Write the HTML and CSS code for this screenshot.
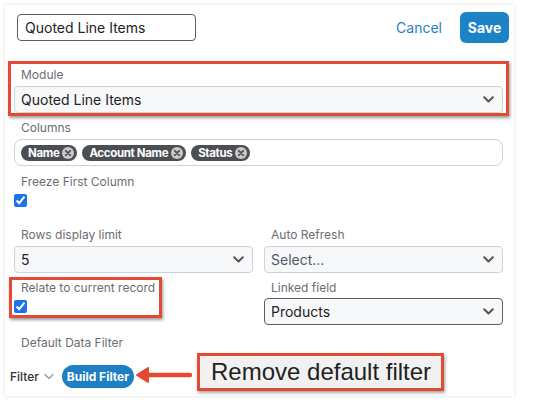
FILE: index.html
```html
<!DOCTYPE html>
<html>
<head>
<meta charset="utf-8">
<link rel="stylesheet" href="styles.css">
</head>
<body>
<div class="card">
  <div class="header">
    <div class="title-input">Quoted Line Items</div>
    <div class="actions">
      <span class="cancel">Cancel</span>
      <span class="save">Save</span>
    </div>
  </div>
  <div class="form">
    <div class="hl hl-module">
      <div class="label">Module</div>
      <div class="select"><span>Quoted Line Items</span><svg class="chev" width="11" height="7" viewBox="0 0 11 7"><path d="M1.2 1.2 L5.5 5.5 L9.8 1.2" fill="none" stroke="#555" stroke-width="2" stroke-linecap="round" stroke-linejoin="round"/></svg></div>
    </div>
    <div class="label mt4">Columns</div>
    <div class="multi">
      <span class="chip">Name<span class="x"><svg width="12" height="12" viewBox="0 0 12 12"><circle cx="6" cy="6" r="6" fill="#c9c9c9"/><path d="M3.8 3.8 L8.2 8.2 M8.2 3.8 L3.8 8.2" stroke="#4b4e52" stroke-width="1.8" stroke-linecap="round"/></svg></span></span>
      <span class="chip">Account Name<span class="x"><svg width="12" height="12" viewBox="0 0 12 12"><circle cx="6" cy="6" r="6" fill="#c9c9c9"/><path d="M3.8 3.8 L8.2 8.2 M8.2 3.8 L3.8 8.2" stroke="#4b4e52" stroke-width="1.8" stroke-linecap="round"/></svg></span></span>
      <span class="chip">Status<span class="x"><svg width="12" height="12" viewBox="0 0 12 12"><circle cx="6" cy="6" r="6" fill="#c9c9c9"/><path d="M3.8 3.8 L8.2 8.2 M8.2 3.8 L3.8 8.2" stroke="#4b4e52" stroke-width="1.8" stroke-linecap="round"/></svg></span></span>
    </div>
    <div class="label mt8">Freeze First Column</div>
    <div class="cb-row"><input type="checkbox" checked></div>
    <div class="grid">
      <div class="col">
        <div class="label">Rows display limit</div>
        <div class="select"><span>5</span><svg class="chev" width="11" height="7" viewBox="0 0 11 7"><path d="M1.2 1.2 L5.5 5.5 L9.8 1.2" fill="none" stroke="#555" stroke-width="2" stroke-linecap="round" stroke-linejoin="round"/></svg></div>
        <div class="hl hl-relate">
          <div class="label">Relate to current record</div>
          <div class="cb-row"><input type="checkbox" checked></div>
        </div>
      </div>
      <div class="col">
        <div class="label">Auto Refresh</div>
        <div class="select"><span class="ph">Select...</span><svg class="chev" width="11" height="7" viewBox="0 0 11 7"><path d="M1.2 1.2 L5.5 5.5 L9.8 1.2" fill="none" stroke="#555" stroke-width="2" stroke-linecap="round" stroke-linejoin="round"/></svg></div>
        <div class="label linked">Linked field</div>
        <div class="select dark"><span>Products</span><svg class="chev" width="11" height="7" viewBox="0 0 11 7"><path d="M1.2 1.2 L5.5 5.5 L9.8 1.2" fill="none" stroke="#555" stroke-width="2" stroke-linecap="round" stroke-linejoin="round"/></svg></div>
      </div>
    </div>
    <div class="label mt10">Default Data Filter</div>
    <div class="filter-row">
      <span class="filter">Filter</span>
      <svg class="fchev" width="10" height="7" viewBox="0 0 10 7"><path d="M1 1.5 L5 5.5 L9 1.5" fill="none" stroke="#9aa3ad" stroke-width="1.6" stroke-linecap="round" stroke-linejoin="round"/></svg>
      <span class="build">Build Filter</span>
      <div class="annot">
        <svg class="arrow" width="58" height="20" viewBox="0 0 58 20"><path d="M55 10 L8 10" stroke="#e24a33" stroke-width="4.5" stroke-linecap="round"/><path d="M2 10 L13 3 L13 17 Z" fill="#e24a33" stroke="#e24a33" stroke-width="2" stroke-linejoin="round"/></svg>
        <div class="note">Remove default filter</div>
      </div>
    </div>
  </div>
</div>
</body>
</html>
```
FILE: styles.css
```css
* { box-sizing: border-box; }
html, body { margin: 0; padding: 0; background: #fff; }
body {
  width: 537px;
  height: 401px;
  overflow: hidden;
  font-family: Inter, "Noto Sans", sans-serif;
  color: #222;
}
.card {
  margin: 5px 0 0 5px;
  width: 509px;
  height: 391px;
  background: #fff;
  box-shadow: 0 0 4px rgba(0, 0, 0, 0.13);
  padding: 7px 5px 0 0;
}
.header {
  display: flex;
  align-items: center;
  justify-content: space-between;
  height: 31px;
  padding-left: 12px;
}
.title-input {
  width: 179px;
  height: 27px;
  border: 1px solid #5d5d5d;
  border-radius: 4px;
  font-size: 14px;
  line-height: 25px;
  padding-left: 7px;
}
.actions { display: flex; align-items: center; gap: 18px; }
.cancel { color: #1f7ec3; font-size: 14px; }
.save {
  background: #1c84c6;
  color: #fff;
  font-weight: 700;
  font-size: 14px;
  height: 31px;
  line-height: 31px;
  width: 49px;
  text-align: center;
  border-radius: 6px;
}
.form {
  padding: 18px 6px 0 9px;
}
.label {
  font-size: 12px;
  line-height: 16px;
  color: #6a6e74;
  padding-left: 7px;
  margin-bottom: 3px;
}
.mt4 { margin-top: 4px; }
.mt8 { margin-top: 8px; }
.mt10 { margin-top: 10px; }
.hl {
  border: 3px solid #e24a33;
  box-shadow: 1px 2px 3px rgba(0, 0, 0, 0.4);
}
.hl-module {
  margin: 0 -6px;
  padding: 3px 3px 0 3px;
}
.select {
  height: 27px;
  border: 1px solid #ccd3dd;
  border-radius: 4px;
  background: #f7f8fa;
  display: flex;
  align-items: center;
  justify-content: space-between;
  padding: 0 8px 0 6px;
  font-size: 14px;
}
.select.dark { border-color: #5d5d5d; }
.ph { color: #4f5967; }
.multi {
  height: 27px;
  border: 1px solid #cbd1df;
  border-radius: 8px;
  display: flex;
  align-items: center;
  gap: 5px;
  padding-left: 6px;
}
.chip {
  display: inline-flex;
  align-items: center;
  height: 16px;
  background: #4b4e52;
  border-radius: 8px;
  color: #fff;
  font-weight: 700;
  font-size: 11.5px;
  padding: 0 3px 0 7px;
  letter-spacing: -0.35px;
}
.chip .x { display: inline-flex; margin-left: 3px; }
.cb-row { height: 13px; margin-top: 4px; display: flex; }
.cb-row input {
  margin: 0;
  width: 13px;
  height: 13px;
  accent-color: #1a73e8;
}
.grid {
  display: grid;
  grid-template-columns: 239px 239px;
  column-gap: 11px;
  align-items: start;
  margin-top: 20px;
}
.hl-relate {
  width: 153px;
  margin: 4px 0 0 -5px;
  padding: 0 0 2px 2px;
}
.hl-relate .label { margin-bottom: 0; }
.linked { margin-top: 7px; margin-bottom: 2px; }
.filter-row {
  position: relative;
  display: flex;
  align-items: center;
  height: 23px;
  margin: 14px 0 0 -4px;
}
.filter { font-size: 12px; font-weight: 500; color: #333; }
.fchev { margin-left: 5px; }
.build {
  margin-left: 8px;
  background: #1e7fc5;
  color: #fff;
  font-weight: 700;
  font-size: 12px;
  height: 23px;
  line-height: 23px;
  width: 72px;
  text-align: center;
  border-radius: 12px;
}
.annot {
  position: absolute;
  left: 125px;
  top: -12px;
  display: flex;
  align-items: center;
}
.arrow { margin: 6px 4px 0 0; }
.note {
  width: 247px;
  height: 38px;
  background: #f1f1f1;
  border: 3px solid #e24a33;
  box-shadow: 1px 2px 3px rgba(0, 0, 0, 0.35);
  font-family: "Liberation Sans", Arial, sans-serif;
  font-size: 24px;
  line-height: 32px;
  padding-left: 11px;
  color: #222;
}
```
